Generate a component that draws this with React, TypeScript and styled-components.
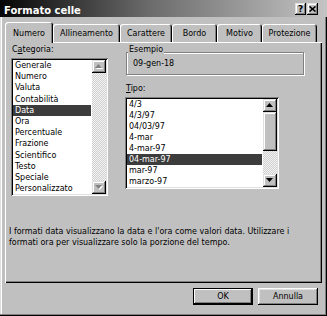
import React from 'react';
import styled, { createGlobalStyle } from 'styled-components';

const GlobalStyle = createGlobalStyle`
  html, body {
    margin: 0;
    padding: 0;
    background: #c0c0c0;
  }
  body {
    font-family: "DejaVu Sans", "Liberation Sans", sans-serif;
    font-size: 8px;
    color: #000;
  }
`;

const raised = `
  box-shadow: inset -1px -1px #000, inset 1px 1px #dfdfdf, inset -2px -2px #808080, inset 2px 2px #fff;
`;

const sunken = `
  box-shadow: inset 1px 1px #808080, inset -1px -1px #fff, inset 2px 2px #000, inset -2px -2px #dfdfdf;
`;

const categories = [
  'Generale',
  'Numero',
  'Valuta',
  'Contabilità',
  'Data',
  'Ora',
  'Percentuale',
  'Frazione',
  'Scientifico',
  'Testo',
  'Speciale',
  'Personalizzato',
];

const types = ['4/3', '4/3/97', '04/03/97', '4-mar', '4-mar-97', '04-mar-97', 'mar-97', 'marzo-97'];

const tabs = [
  { label: 'Numero', width: 48 },
  { label: 'Allineamento', width: 67 },
  { label: 'Carattere', width: 52 },
  { label: 'Bordo', width: 45 },
  { label: 'Motivo', width: 45 },
  { label: 'Protezione', width: 55 },
];

function Arrow({ dir, disabled }: { dir: 'up' | 'down'; disabled?: boolean }) {
  const pts = dir === 'up' ? '3.5,0 7,4 0,4' : '0,0 7,0 3.5,4';
  return (
    <svg width="8" height="5" viewBox="0 0 8 5">
      {disabled && <polygon points={pts} fill="#fff" transform="translate(1,1)" />}
      <polygon points={pts} fill={disabled ? '#808080' : '#000'} />
    </svg>
  );
}

interface ListProps {
  items: string[];
  selected: number;
  width: number;
  height: number;
  rowHeight: number;
  thumb?: number;
  disabled?: boolean;
}

function ListBox({ items, selected, width, height, rowHeight, thumb, disabled }: ListProps) {
  return (
    <Style.List $w={width} $h={height}>
      <Style.Items>
        {items.map((it, i) => (
          <Style.Item key={it} $rh={rowHeight} $active={i === selected}>
            {it}
          </Style.Item>
        ))}
      </Style.Items>
      <Style.ScrollBar>
        <Style.ScrollButton>
          <Arrow dir="up" disabled={disabled} />
        </Style.ScrollButton>
        <Style.Track>{thumb ? <Style.Thumb $h={thumb} /> : null}</Style.Track>
        <Style.ScrollButton>
          <Arrow dir="down" disabled={disabled} />
        </Style.ScrollButton>
      </Style.ScrollBar>
    </Style.List>
  );
}

export default function App() {
  return (
    <>
      <GlobalStyle />
      <Style.Window>
        <Style.TitleBar>
          <Style.TitleText>Formato celle</Style.TitleText>
          <Style.CaptionButtons>
            <Style.CaptionButton>?</Style.CaptionButton>
            <Style.CaptionButton>
              <svg width="7" height="6" viewBox="0 0 7 6">
                <path d="M0.5 0.5 L6.5 5.5 M6.5 0.5 L0.5 5.5" stroke="#000" strokeWidth="1.6" />
              </svg>
            </Style.CaptionButton>
          </Style.CaptionButtons>
        </Style.TitleBar>

        <Style.Body>
          <Style.TabRow>
            {tabs.map((t, i) => (
              <Style.Tab key={t.label} $w={t.width} $active={i === 0}>
                {t.label}
              </Style.Tab>
            ))}
          </Style.TabRow>

          <Style.Panel>
            <Style.Columns>
              <div>
                <Style.Label>
                  C<u>a</u>tegoria:
                </Style.Label>
                <Style.ListGap>
                  <ListBox items={categories} selected={4} width={97} height={138} rowHeight={11.2} disabled />
                </Style.ListGap>
              </div>
              <div>
                <Style.Group>
                  <Style.Legend>Esempio</Style.Legend>
                  <Style.Sample>09-gen-18</Style.Sample>
                </Style.Group>
                <Style.TipoLabel>
                  <u>T</u>ipo:
                </Style.TipoLabel>
                <Style.ListGap>
                  <ListBox items={types} selected={5} width={154} height={92} rowHeight={11} thumb={39} />
                </Style.ListGap>
              </div>
            </Style.Columns>
            <Style.Description>
              I formati data visualizzano la data e l'ora come valori data. Utilizzare i<br />
              formati ora per visualizzare solo la porzione del tempo.
            </Style.Description>
          </Style.Panel>

          <Style.Footer>
            <Style.Button $default>OK</Style.Button>
            <Style.Button>Annulla</Style.Button>
          </Style.Footer>
        </Style.Body>
      </Style.Window>
    </>
  );
}

const Style = {
  Window: styled.div`
    width: 327px;
    height: 316px;
    box-sizing: border-box;
    display: flex;
    flex-direction: column;
    background: #c0c0c0;
    box-shadow: inset -1px -1px #000, inset -2px -2px #808080, inset 1px 0 #dfdfdf, inset 2px 0 #fff;
    overflow: hidden;
  `,

  TitleBar: styled.div`
    height: 17px;
    display: flex;
    align-items: flex-start;
    padding: 0 9px 0 4px;
    background: linear-gradient(90deg, #050505 0%, #6a6a6a 45%, #c4c4c4 100%);
  `,

  TitleText: styled.div`
    margin-top: 5px;
    color: #fff;
    font-weight: bold;
    font-size: 10px;
    line-height: 12px;
    white-space: nowrap;
  `,

  CaptionButtons: styled.div`
    margin-left: auto;
    margin-top: 3px;
    display: flex;
    gap: 1px;
  `,

  CaptionButton: styled.div`
    width: 11px;
    height: 12px;
    box-sizing: border-box;
    display: flex;
    align-items: center;
    justify-content: center;
    background: #c0c0c0;
    font-weight: bold;
    font-size: 9px;
    line-height: 12px;
    ${raised}
  `,

  Body: styled.div`
    flex: 1;
    display: flex;
    flex-direction: column;
    padding: 5px 5px 0 5px;
  `,

  TabRow: styled.div`
    height: 20px;
    display: flex;
    align-items: flex-end;
  `,

  Tab: styled.div<{ $w: number; $active?: boolean }>`
    position: relative;
    z-index: ${(p) => (p.$active ? 1 : 0)};
    width: ${(p) => p.$w}px;
    height: ${(p) => (p.$active ? 21 : 18)}px;
    margin-bottom: ${(p) => (p.$active ? -1 : 0)}px;
    box-sizing: border-box;
    padding-top: ${(p) => (p.$active ? 6 : 4)}px;
    text-align: center;
    line-height: 11px;
    white-space: nowrap;
    background: #c0c0c0;
    border-radius: 3px 3px 0 0;
    box-shadow: inset 1px 1px #fff, inset -1px 0 #000, inset -2px 0 #808080;
  `,

  Panel: styled.div`
    height: 241px;
    box-sizing: border-box;
    padding: 2px 4px 0 4px;
    box-shadow: inset 1px 1px #fff, inset -1px -1px #000, inset -2px -2px #808080;
  `,

  Columns: styled.div`
    display: grid;
    grid-template-columns: 97px 1fr;
    column-gap: 17px;
    padding-left: 2px;
  `,

  Label: styled.div`
    line-height: 11px;
    padding-left: 1px;
  `,

  ListGap: styled.div`
    margin-top: 3px;
  `,

  List: styled.div<{ $w: number; $h: number }>`
    width: ${(p) => p.$w}px;
    height: ${(p) => p.$h}px;
    box-sizing: border-box;
    padding: 2px;
    display: flex;
    background: #fff;
    ${sunken}
  `,

  Items: styled.div`
    flex: 1;
    overflow: hidden;
    padding-right: 1px;
  `,

  Item: styled.div<{ $rh: number; $active?: boolean }>`
    height: ${(p) => p.$rh}px;
    line-height: ${(p) => p.$rh}px;
    padding-left: 2px;
    white-space: nowrap;
    background: ${(p) => (p.$active ? '#3c3c3c' : 'transparent')};
    color: ${(p) => (p.$active ? '#fff' : '#000')};
  `,

  ScrollBar: styled.div`
    width: 14px;
    display: flex;
    flex-direction: column;
  `,

  ScrollButton: styled.div`
    height: 13px;
    box-sizing: border-box;
    display: flex;
    align-items: center;
    justify-content: center;
    background: #c0c0c0;
    ${raised}
  `,

  Track: styled.div`
    flex: 1;
    background-color: #e0e0e0;
    background-image: repeating-conic-gradient(#f4f4f4 0 25%, #cfcfcf 0 50%);
    background-size: 2px 2px;
  `,

  Thumb: styled.div<{ $h: number }>`
    height: ${(p) => p.$h}px;
    box-sizing: border-box;
    background: #c0c0c0;
    ${raised}
  `,

  Group: styled.div`
    margin: 8px 0 0 1px;
    width: 178px;
    height: 23px;
    box-sizing: border-box;
    border: 1px solid #808080;
    box-shadow: 1px 1px 0 #fff, inset 1px 1px 0 #fff;
  `,

  Legend: styled.div`
    display: table;
    margin: -9px 0 0 1px;
    padding: 0 1px;
    line-height: 11px;
    background: #c0c0c0;
  `,

  Sample: styled.div`
    margin-top: 3px;
    padding-left: 6px;
    line-height: 11px;
  `,

  TipoLabel: styled.div`
    margin-top: 8px;
    padding-left: 1px;
    line-height: 11px;
  `,

  Description: styled.div`
    margin-top: 30px;
    line-height: 11px;
  `,

  Footer: styled.div`
    margin-top: 5px;
    padding-right: 4px;
    display: flex;
    justify-content: flex-end;
    gap: 5px;
  `,

  Button: styled.div<{ $default?: boolean }>`
    width: 60px;
    height: 17px;
    box-sizing: border-box;
    display: flex;
    align-items: center;
    justify-content: center;
    background: #c0c0c0;
    box-shadow: ${(p) =>
      p.$default
        ? 'inset 0 0 0 1px #000, inset -2px -2px #000, inset 2px 2px #fff, inset -3px -3px #808080'
        : 'inset -1px -1px #000, inset 1px 1px #fff, inset -2px -2px #808080, inset 2px 2px #dfdfdf'};
  `,
};
